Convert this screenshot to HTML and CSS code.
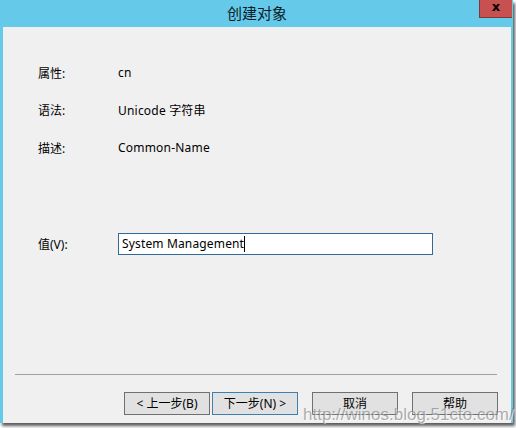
FILE: index.html
```html
<!DOCTYPE html>
<html lang="zh-CN">
<head>
<meta charset="utf-8">
<title>创建对象</title>
<link rel="stylesheet" href="styles.css">
</head>
<body>
<div class="window">
  <div class="titlebar">
    <span class="spacer"></span>
    <span class="title">创建对象</span>
    <span class="close-wrap"><span class="close">x</span></span>
  </div>
  <div class="client">
    <div class="info">
      <div class="row"><span class="label">属性:</span><span class="value">cn</span></div>
      <div class="row"><span class="label">语法:</span><span class="value">Unicode 字符串</span></div>
      <div class="row"><span class="label">描述:</span><span class="value">Common-Name</span></div>
    </div>
    <div class="row value-row">
      <span class="label">值(V):</span>
      <div class="input"><span class="input-text">System Management</span><span class="caret"></span></div>
    </div>
    <div class="separator"></div>
    <div class="buttons">
      <button class="btn">&lt; 上一步(B)</button>
      <button class="btn btn-focus">下一步(N) &gt;</button>
      <button class="btn btn-gap">取消</button>
      <button class="btn btn-gap">帮助</button>
    </div>
  </div>
</div>
<div class="watermark">http://winos.blog.51cto.com/</div>
</body>
</html>
```

FILE: styles.css
```css
html, body {
  margin: 0;
  padding: 0;
  width: 516px;
  height: 428px;
  overflow: hidden;
  background: #ffffff;
}
body {
  position: relative;
  font-family: "Noto Sans", "Noto Sans CJK SC", sans-serif;
  font-size: 12px;
  color: #000;
}
.window {
  width: 513px;
  height: 423px;
  box-sizing: border-box;
  background: #65c9ea;
  display: flex;
  flex-direction: column;
  box-shadow: 2px 3px 3px rgba(0, 0, 0, 0.65);
}
.titlebar {
  height: 27px;
  flex: none;
  display: grid;
  grid-template-columns: 1fr auto 1fr;
}
.title {
  font-family: "Noto Sans CJK SC", sans-serif;
  font-size: 15px;
  line-height: 25px;
  color: #0c1c26;
  padding-left: 1px;
}
.close-wrap {
  display: flex;
  justify-content: flex-end;
  align-items: flex-start;
  padding-right: 1px;
}
.close {
  width: 33px;
  height: 18px;
  box-sizing: border-box;
  background: #c75050;
  border-left: 1px solid #7d3838;
  border-bottom: 1px solid #7d3838;
  color: #000;
  font-family: "DejaVu Sans", sans-serif;
  font-weight: bold;
  font-size: 13px;
  line-height: 14px;
  text-align: center;
}
.client {
  flex: 1;
  margin: 0 2px 0 3px;
  background: #f0f0f0;
  display: flex;
  flex-direction: column;
}
.info {
  padding-top: 27px;
}
.row {
  display: flex;
  align-items: center;
  height: 37.5px;
  padding-left: 35px;
}
.label {
  width: 80px;
  flex: none;
}
.value {
  letter-spacing: 0.2px;
}
.value-row {
  margin-top: 66px;
  height: 22px;
}
.input {
  width: 315px;
  height: 22px;
  box-sizing: border-box;
  border: 1px solid #2f6a9c;
  background: #fff;
  display: flex;
  align-items: center;
  padding-left: 3px;
}
.input-text {
  font-size: 12px;
  letter-spacing: 0.15px;
}
.caret {
  width: 1px;
  height: 16px;
  background: #000;
}
.separator {
  margin: 119px 14px 0 12px;
  height: 1px;
  background: #a0a0a0;
}
.buttons {
  margin-top: 17px;
  display: flex;
  justify-content: flex-end;
  padding-right: 13px;
  gap: 2px;
}
.btn {
  width: 86px;
  height: 23px;
  box-sizing: border-box;
  margin: 0;
  padding: 0;
  background: #e1e1e1;
  border: 1px solid #707070;
  font-family: "Noto Sans", "Noto Sans CJK SC", sans-serif;
  font-size: 12px;
  color: #000;
}
.btn-focus {
  border-color: #3c7fb1;
}
.btn-gap {
  margin-left: 12px;
}
.watermark {
  position: absolute;
  left: 303px;
  top: 405px;
  font-family: "Liberation Sans", sans-serif;
  font-size: 17px;
  color: rgba(110, 110, 110, 0.55);
  white-space: nowrap;
  text-shadow: 1px 1px 1px rgba(255, 255, 255, 0.7);
}
```
